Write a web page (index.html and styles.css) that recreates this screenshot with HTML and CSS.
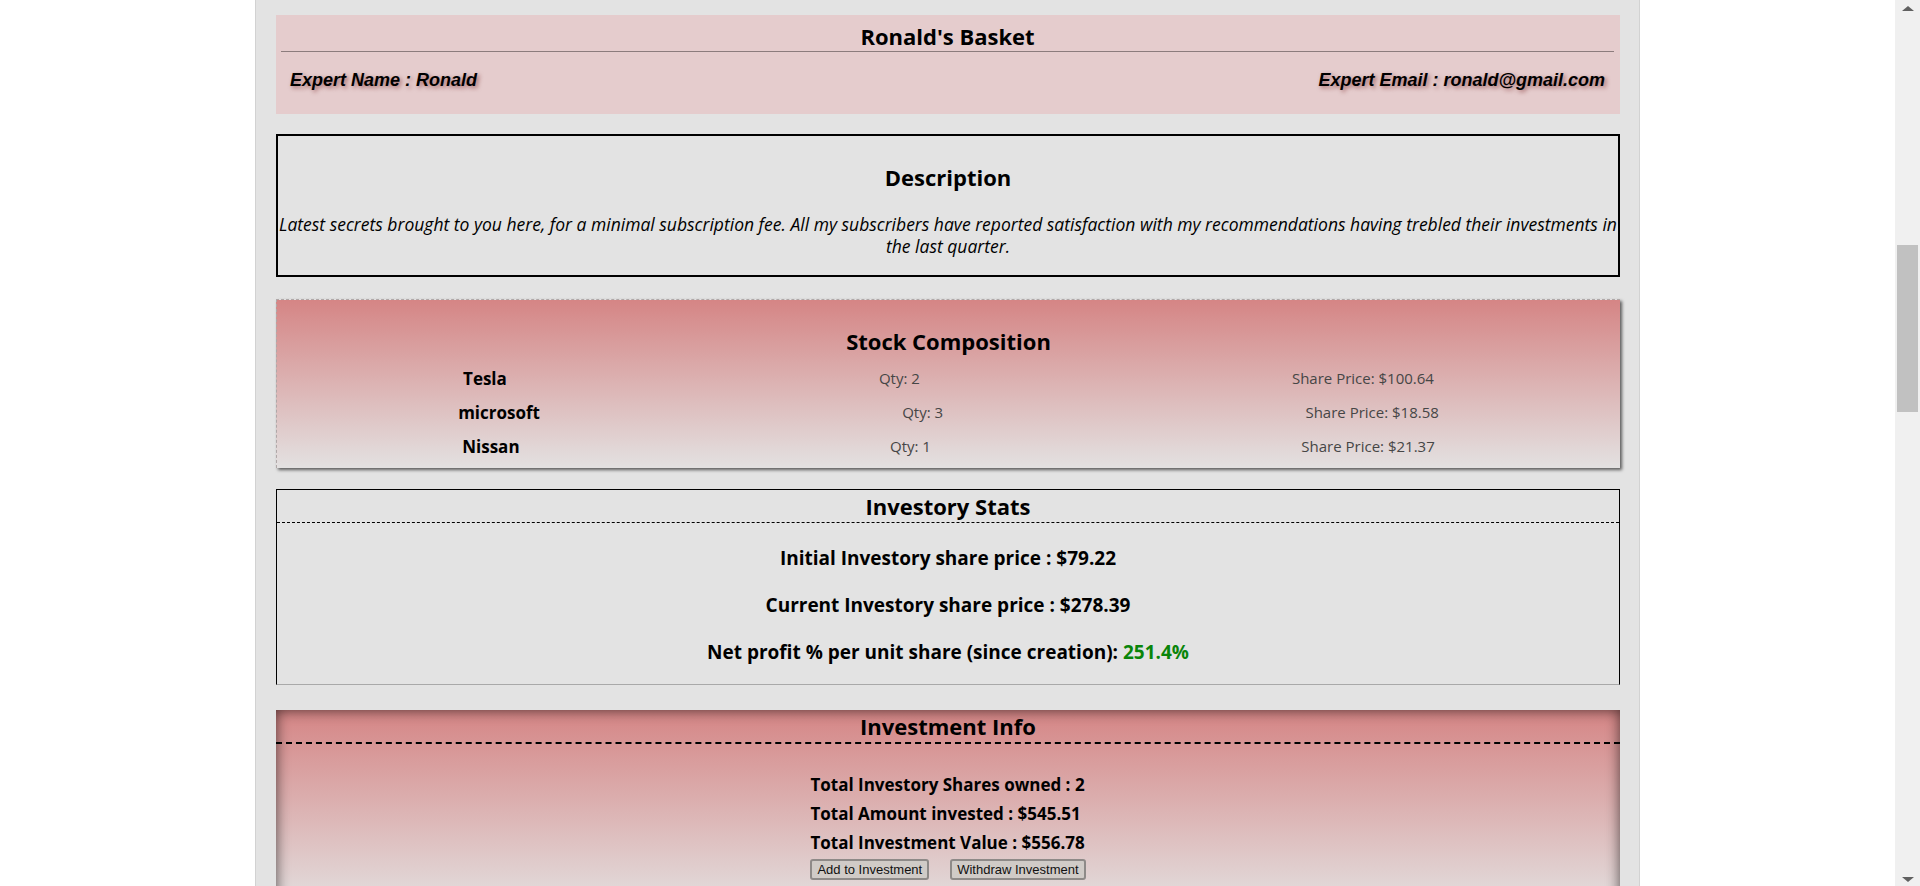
FILE: index.html
```html
<!DOCTYPE html>
<html lang="en">
<head>
<meta charset="utf-8">
<title>Ronald's Basket</title>
<link rel="stylesheet" href="styles.css">
</head>
<body>
<div class="screen">
  <div class="viewport">
    <main class="container">
      <section class="basket-head">
        <h2 class="basket-title">Ronald's Basket</h2>
        <div class="expert-row">
          <span class="expert">Expert Name : Ronald</span>
          <span class="expert">Expert Email : ronald@gmail.com</span>
        </div>
      </section>

      <section class="desc-box">
        <h3 class="box-title">Description</h3>
        <p class="desc-text">Latest secrets brought to you here, for a minimal subscription fee. All my subscribers have reported satisfaction with my recommendations having trebled their investments in the last quarter.</p>
      </section>

      <section class="stock-box">
        <h3 class="box-title">Stock Composition</h3>
        <div class="stock-row">
          <span class="stock-name">Tesla</span>
          <span class="stock-meta">Qty: 2</span>
          <span class="stock-meta">Share Price: $100.64</span>
        </div>
        <div class="stock-row">
          <span class="stock-name">microsoft</span>
          <span class="stock-meta">Qty: 3</span>
          <span class="stock-meta">Share Price: $18.58</span>
        </div>
        <div class="stock-row">
          <span class="stock-name">Nissan</span>
          <span class="stock-meta">Qty: 1</span>
          <span class="stock-meta">Share Price: $21.37</span>
        </div>
      </section>

      <section class="stats-box">
        <h3 class="stats-title">Investory Stats</h3>
        <p class="stat-line">Initial Investory share price : $79.22</p>
        <p class="stat-line">Current Investory share price : $278.39</p>
        <p class="stat-line">Net profit % per unit share (since creation): <span class="profit">251.4%</span></p>
      </section>

      <section class="invest-box">
        <h3 class="invest-title">Investment Info</h3>
        <div class="invest-body">
          <div class="invest-block">
            <p class="invest-line">Total Investory Shares owned : 2</p>
            <p class="invest-line">Total Amount invested : $545.51</p>
            <p class="invest-line">Total Investment Value : $556.78</p>
            <div class="invest-actions">
              <button class="btn" type="button">Add to Investment</button>
              <button class="btn" type="button">Withdraw Investment</button>
            </div>
          </div>
        </div>
      </section>
    </main>
  </div>
  <div class="scrollbar">
    <div class="sb-arrow sb-up"></div>
    <div class="sb-track">
      <div class="sb-thumb"></div>
    </div>
    <div class="sb-arrow sb-down"></div>
  </div>
</div>
</body>
</html>
```

FILE: styles.css
```css
* { box-sizing: border-box; }

html, body {
  margin: 0;
  padding: 0;
  height: 886px;
  overflow: hidden;
  background: #ffffff;
}

body {
  font-family: "Open Sans", "Lato", sans-serif;
  color: #000;
}

.screen {
  display: flex;
  width: 1920px;
  height: 886px;
}

.viewport {
  flex: 1;
  height: 886px;
  overflow: hidden;
}

.container {
  width: 1385px;
  margin: 0 auto;
  height: 886px;
  overflow: hidden;
  background: #e3e3e3;
  border-left: 1px solid #d2d2d2;
  border-right: 1px solid #d2d2d2;
  padding: 15px 19px 0 20px;
}

/* ---------- header ---------- */
.basket-head {
  background: #e5cccd;
  padding: 7px 6px 0 5px;
  height: 99px;
}

.basket-title {
  margin: 0;
  font-size: 22px;
  line-height: 29px;
  font-weight: 700;
  text-align: center;
  border-bottom: 1px solid #8c7c7d;
}

.expert-row {
  display: flex;
  justify-content: space-between;
  padding: 0 9px 0 9px;
  margin-top: 18px;
}

.expert {
  font-family: "Liberation Sans", Arial, sans-serif;
  font-style: italic;
  font-weight: 700;
  font-size: 18px;
  line-height: 20px;
  text-shadow: 2px 2px 4px rgba(110, 20, 20, 0.55);
}

/* ---------- description ---------- */
.desc-box {
  margin-top: 20px;
  border: 2px solid #000;
  padding: 27px 0 18px;
  text-align: center;
}

.box-title {
  margin: 0;
  font-size: 22px;
  line-height: 28px;
  font-weight: 700;
  text-align: center;
}

.desc-text {
  margin: 22px 0 0;
  font-style: italic;
  font-size: 17.5px;
  line-height: 22px;
}

/* ---------- stock composition ---------- */
.stock-box {
  margin-top: 22px;
  height: 169px;
  border-top: 1px dashed #b0a8a8;
  border-left: 1px dashed #b0a8a8;
  background: linear-gradient(to bottom, #d58585 0%, #e3e1e1 100%);
  box-shadow: 2px 2px 3px rgba(0, 0, 0, 0.6);
  padding-top: 27px;
}

.stock-row {
  display: flex;
  justify-content: space-around;
  align-items: center;
  height: 34px;
}

.stock-row:first-of-type { margin-top: 6px; }

.stock-name {
  font-weight: 700;
  font-size: 17px;
}

.stock-meta {
  font-size: 15px;
  color: #464646;
}

/* ---------- stats ---------- */
.stats-box {
  margin-top: 21px;
  border: 1px solid #000;
  border-bottom-color: #a9a9a9;
  height: 196px;
}

.stats-title {
  margin: 0;
  font-size: 22px;
  line-height: 32px;
  font-weight: 700;
  text-align: center;
  border-bottom: 1px dashed #000;
}

.stat-line {
  margin: 23px 0 0;
  font-size: 19px;
  line-height: 24px;
  font-weight: 700;
  text-align: center;
}

.stat-line + .stat-line { margin-top: 23px; }

.profit { color: #0a850a; }

/* ---------- investment info ---------- */
.invest-box {
  margin-top: 25px;
  height: 200px;
  background: linear-gradient(to bottom, #d58585 0%, #e3e1e1 100%);
  box-shadow: inset 0 0 14px rgba(0, 0, 0, 0.65);
}

.invest-title {
  margin: 0;
  font-size: 22px;
  line-height: 32px;
  font-weight: 700;
  text-align: center;
  border-bottom: 2px dashed #000;
}

.invest-body {
  display: flex;
  justify-content: center;
  padding-top: 26px;
}

.invest-block {
  text-align: left;
}

.invest-line {
  margin: 0;
  font-size: 17px;
  line-height: 29px;
  font-weight: 700;
}

.invest-actions {
  display: flex;
  gap: 21px;
  margin-top: 2px;
}

.btn {
  font-family: "Liberation Sans", Arial, sans-serif;
  font-size: 13px;
  line-height: 16px;
  height: 21px;
  padding: 0 5px;
  color: #111;
  background: #d0cbc7;
  border: 2px solid #8e8a88;
  border-radius: 3px;
}

/* ---------- scrollbar ---------- */
.scrollbar {
  width: 25px;
  height: 886px;
  background: #f0f0f0;
  display: flex;
  flex-direction: column;
  align-items: center;
}

.sb-arrow {
  width: 0;
  height: 0;
  border-left: 6px solid transparent;
  border-right: 6px solid transparent;
}

.sb-up {
  margin-top: 6px;
  border-bottom: 5px solid #606060;
}

.sb-down {
  margin-bottom: 4px;
  border-top: 5px solid #606060;
}

.sb-track {
  flex: 1;
  width: 100%;
  padding: 234px 2px 0 2px;
}

.sb-thumb {
  height: 167px;
  background: #c1c1c1;
}
```
